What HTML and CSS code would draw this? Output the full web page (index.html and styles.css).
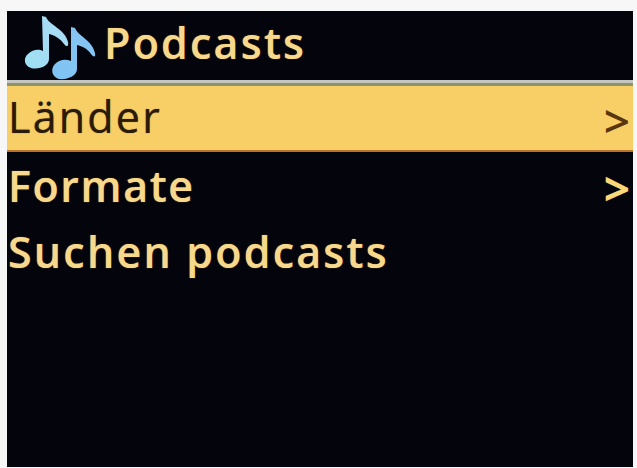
FILE: index.html
```html
<!DOCTYPE html>
<html lang="de">
<head>
<meta charset="utf-8">
<title>Podcasts</title>
<link rel="stylesheet" href="styles.css">
</head>
<body>
<main class="screen">
  <header class="title-bar">
    <svg class="note-icon" viewBox="0 0 72 64" aria-hidden="true">
      <defs>
        <linearGradient id="noteA" x1="0" y1="1" x2="1" y2="0">
          <stop offset="0" stop-color="#9fe0f2"/>
          <stop offset="1" stop-color="#a9daf6"/>
        </linearGradient>
        <linearGradient id="noteB" x1="0" y1="1" x2="1" y2="0">
          <stop offset="0" stop-color="#7fc4f4"/>
          <stop offset="1" stop-color="#88c4f2"/>
        </linearGradient>
      </defs>
      <path fill="url(#noteA)" d="M18 0 L22 1 C25 9 41 13 44 26 C45 31 42 31 40 28 C37 23 30 19 25 18 L25 43 C25 50 15 54 7 52 C0 50 -1 42 4 38 C9 33 15 33 19 35 Z"/>
      <path fill="url(#noteB)" d="M47 11 L51 12 C54 20 68 24 71 37 C72 42 69 41 67 38 C64 33 58 30 53 29 L53 53 C53 60 43 64 35 63 C28 61 26 53 31 48 C36 43 42 43 47 45 Z"/>
    </svg>
    <h1 class="title">Podcasts</h1>
  </header>
  <div class="divider"></div>
  <ul class="menu">
    <li class="item item-selected"><span>Länder</span><span class="chevron">&gt;</span></li>
    <li class="item"><span class="label-tight">Formate</span><span class="chevron chevron-bright">&gt;</span></li>
    <li class="item"><span>Suchen podcasts</span></li>
  </ul>
</main>
</body>
</html>
```

FILE: styles.css
```css
html, body {
  margin: 0;
  height: 100%;
  background: #f7f7f7;
  overflow: hidden;
}
body {
  padding: 11px 4px 0 7px;
  box-sizing: border-box;
  font-family: "Open Sans", sans-serif;
}
.screen {
  height: 456px;
  background: #04050c;
  display: flex;
  flex-direction: column;
}
.title-bar {
  height: 69px;
  display: flex;
  align-items: center;
  gap: 8px;
  padding-left: 17px;
}
.note-icon {
  width: 72px;
  height: 64px;
  flex: none;
  margin-top: 5px;
}
.title {
  margin: 0 0 6px;
  font-size: 43px;
  font-weight: 600;
  color: #f6d98c;
  letter-spacing: 2.2px;
  line-height: 1;
  text-shadow: 0 0 1px #c98a2a;
}
.divider {
  height: 6px;
  background: linear-gradient(#c4c6c0 0 3px, #8d9468 3px);
}
.menu {
  list-style: none;
  margin: 0;
  padding: 0;
}
.item {
  height: 66px;
  display: flex;
  justify-content: space-between;
  align-items: center;
  padding: 0 3px 0 1px;
  font-size: 43px;
  font-weight: 600;
  letter-spacing: 2.2px;
  color: #f6d98c;
  text-shadow: 0 0 1px #c98a2a;
}
.label-tight {
  letter-spacing: 1.6px;
}
.item-selected {
  height: 66px;
  padding-bottom: 3px;
  background: #f8cf66;
  border-bottom: 2px solid #b8742a;
  box-sizing: border-box;
  color: #2a1a08;
  font-weight: 400;
  text-shadow: 0 0 1px #6a4a1a;
}
.chevron {
  font-size: 46px;
  font-weight: 600;
  letter-spacing: 0;
  margin-top: 6px;
  color: #5a3610;
  text-shadow: none;
}
.chevron-bright {
  font-weight: 700;
  color: #f8d878;
}
```
